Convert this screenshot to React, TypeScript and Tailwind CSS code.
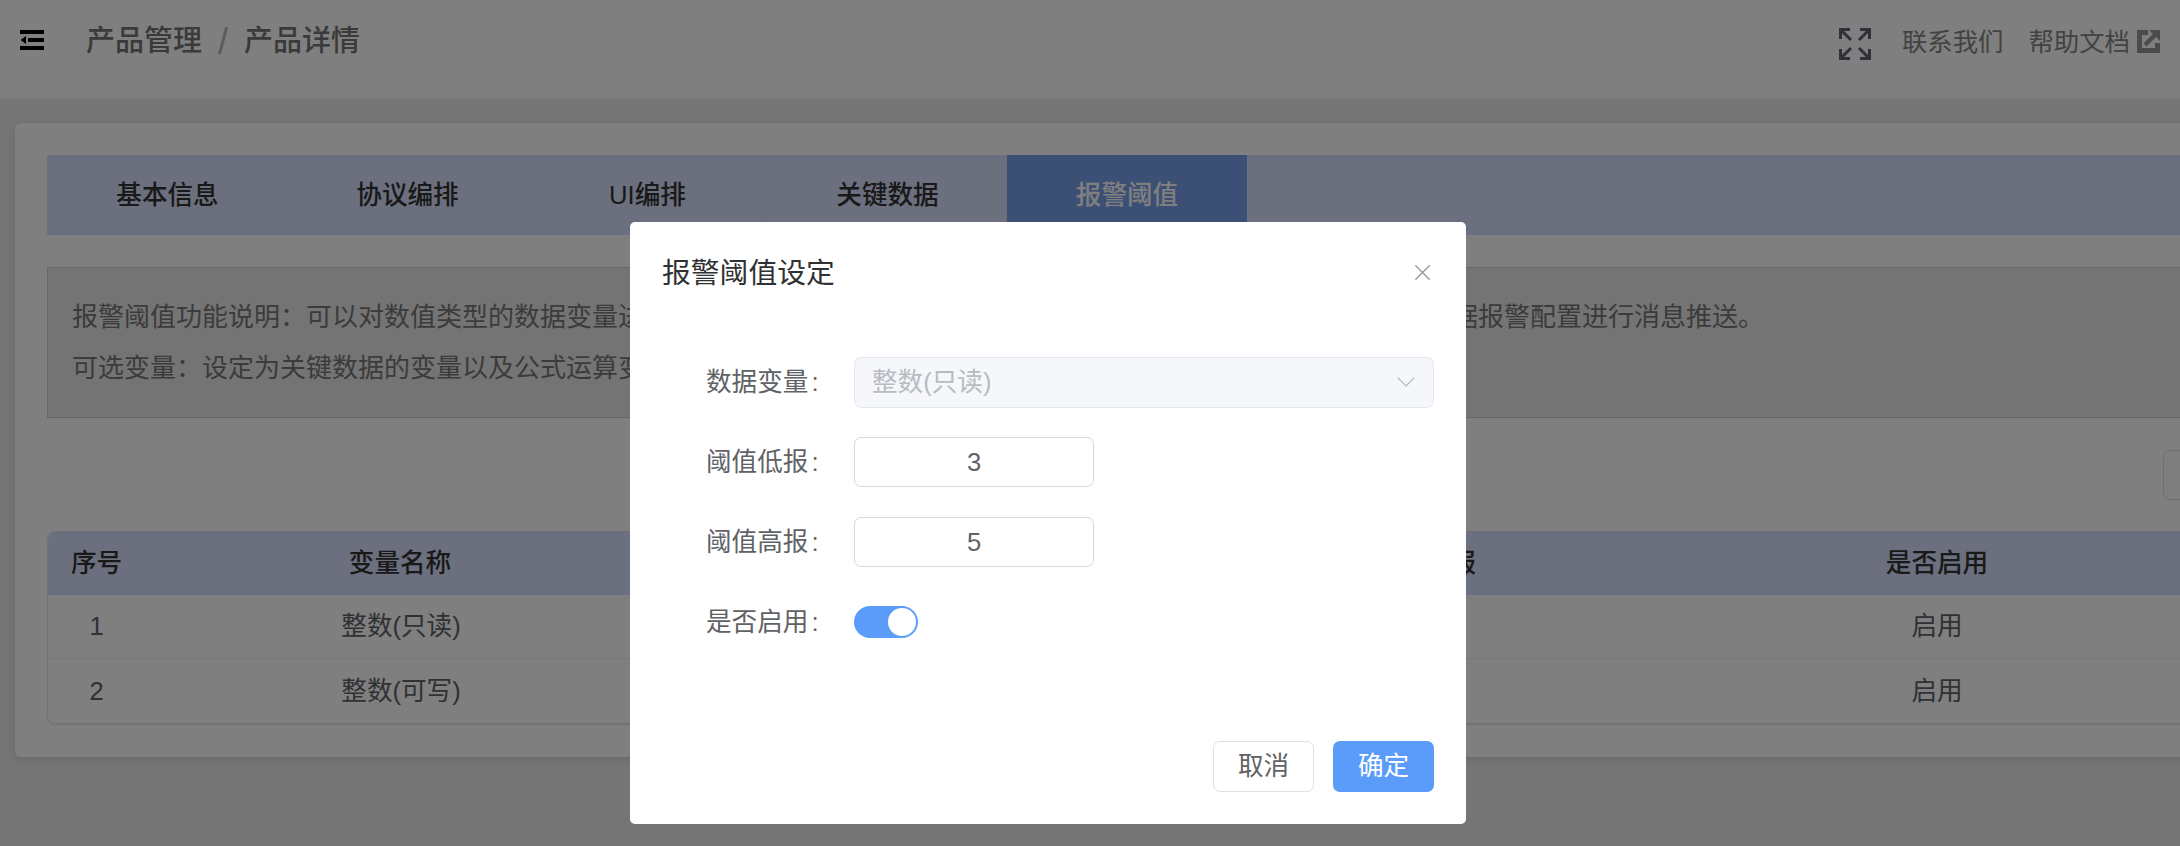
import { ChevronDown, X } from "lucide-react";

const tabs = ["基本信息", "协议编排", "UI编排", "关键数据", "报警阈值"];

const rows = [
  { id: 1, name: "整数(只读)", low: "3", high: "5", enabled: "启用" },
  { id: 2, name: "整数(可写)", low: "3", high: "5", enabled: "启用" },
];

function MenuIcon() {
  return (
    <svg width="24" height="20" viewBox="0 0 24 20" fill="#000">
      <rect x="0" y="0" width="24" height="4" />
      <rect x="8" y="8" width="16" height="4" />
      <rect x="0" y="16" width="24" height="4" />
      <path d="M6 6v8L0.5 10z" />
    </svg>
  );
}

function ExpandIcon() {
  return (
    <svg width="32" height="32" viewBox="0 0 32 32" fill="none" stroke="#5f6270" strokeWidth="3">
      <path d="M1.5 11V1.5H11M1.5 1.5L12 12" />
      <path d="M21 1.5h9.5V11M30.5 1.5L20 12" />
      <path d="M1.5 21v9.5H11M1.5 30.5L12 20" />
      <path d="M21 30.5h9.5V21M30.5 30.5L20 20" />
    </svg>
  );
}

function ExternalIcon() {
  return (
    <svg width="23" height="23" viewBox="0 0 23 23" fill="none">
      <path d="M11 2.5H2.5v18h18V13" stroke="#979797" strokeWidth="5" />
      <path d="M8 15L18 5" stroke="#979797" strokeWidth="4.5" />
      <path d="M12 0h11v11z" fill="#979797" />
    </svg>
  );
}

function FormRow({ label, children }: { label: string; children: React.ReactNode }) {
  return (
    <div className="flex h-[50px] items-center">
      <label className="w-[224px] shrink-0 pl-[76px] text-[25.6px] text-[#606266]">
        {label}
        <span className="ml-[3px]">:</span>
      </label>
      {children}
    </div>
  );
}

export default function App() {
  return (
    <div
      className="relative h-[846px] w-[2180px] overflow-hidden bg-[#ebebeb]"
      style={{ fontFamily: '"Liberation Sans", "Noto Sans CJK SC", sans-serif' }}
    >
      <header className="flex h-[99px] items-center border-b border-[#eceef1] bg-white pb-[14px] pl-5 pr-[20px]">
        <span className="mb-[4px]">
          <MenuIcon />
        </span>
        <div className="ml-[42px] flex items-center text-[29px] font-medium text-[#757575]">
          <span>产品管理</span>
          <span className="mx-[16px] text-[36px] font-normal leading-none text-[#b4b6bb]">/</span>
          <span>产品详情</span>
        </div>
        <div className="ml-auto flex items-center text-[25.4px] text-[#858585]">
          <span className="mt-[4px]">
            <ExpandIcon />
          </span>
          <span className="ml-[31px]">联系我们</span>
          <span className="ml-[25px]">帮助文档</span>
          <span className="ml-[7px]">
            <ExternalIcon />
          </span>
        </div>
      </header>

      <main className="ml-[15px] mt-[24px] h-[634px] w-[2300px] rounded-[6px] bg-white px-[32px] pt-[32px] shadow-[0_2px_12px_rgba(0,0,0,0.1)]">
        <div className="flex h-[80px] bg-[#d8defa]">
          {tabs.map((tab, i) => (
            <div
              key={tab}
              className={
                i === 4
                  ? "flex w-[240px] items-center justify-center bg-[#789fea] text-[25.6px] font-medium text-white"
                  : "flex w-[240px] items-center justify-center border-r border-[#d4daf6] pl-[2px] text-[25.6px] font-medium text-[#333333]"
              }
            >
              {tab}
            </div>
          ))}
        </div>

        <div className="mt-[32px] flex h-[151px] flex-col justify-center whitespace-nowrap border border-[#cfcfcf] bg-[#e8e8e8] px-[24px] text-[26px] leading-[51px] text-[#777777]">
          <p>报警阈值功能说明{"\uFF1A"}可以对数值类型的数据变量进行阈值设定,当数据超过或低于设定的阈值范围('时将触发报警,平台将根据报警配置进行消息推送。</p>
          <p>可选变量{"\uFF1A"}设定为关键数据的变量以及公式运算变量。</p>
        </div>

        <div className="mt-[32px] flex justify-end pr-[20px]">
          <button className="h-[50px] w-[100px] rounded-[7px] border border-[#dcdfe6] bg-white" />
        </div>

        <div className="mt-[31px] rounded-[8px] border-b-[2px] border-l border-[#e4e6ea] shadow-[0_1px_2px_rgba(0,0,0,0.05)]">
          <div className="grid h-[64px] grid-cols-[97px_repeat(4,512px)] items-center rounded-t-[8px] bg-[#d8defa] text-center text-[25.6px] font-medium text-[#333333]">
            <span>序号</span>
            <span className="pr-[2px]">变量名称</span>
            <span>阈值低报</span>
            <span>阈值高报</span>
            <span>是否启用</span>
          </div>
          {rows.map((row, i) => (
            <div
              key={row.id}
              className={
                i === 0
                  ? "grid h-[64px] grid-cols-[97px_repeat(4,512px)] items-center border-b border-[#ebeef5] text-center text-[25.6px] text-[#606266]"
                  : "grid h-[64px] grid-cols-[97px_repeat(4,512px)] items-center text-center text-[25.6px] text-[#606266]"
              }
            >
              <span>{row.id}</span>
              <span>{row.name}</span>
              <span>{row.low}</span>
              <span>{row.high}</span>
              <span>{row.enabled}</span>
            </div>
          ))}
        </div>
      </main>

      {/* dialog mask */}
      <div className="absolute inset-0 bg-black/50" />

      <div className="absolute left-[630px] top-[222px] flex h-[602px] w-[836px] flex-col rounded-[5px] bg-white">
        <div className="flex h-[135px] shrink-0 items-start justify-between pl-[32px] pr-[33px] pt-[30px]">
          <h2 className="text-[28.8px] leading-[42px] text-[#303133]">报警阈值设定</h2>
          <X size={27} strokeWidth={1.1} className="mr-[-3px] mt-[7px] text-[#909399]" />
        </div>

        <div className="flex flex-col gap-[30px]">
          <FormRow label="数据变量">
            <div className="flex h-[51px] w-[580px] items-center justify-between rounded-[7px] border border-[#e4e7ed] bg-[#f5f7fa] pl-[17px] pr-[11px] text-[25.6px] text-[#b8bbc2]">
              <span>整数(只读)</span>
              <ChevronDown size={32} strokeWidth={0.9} />
            </div>
          </FormRow>
          <FormRow label="阈值低报">
            <div className="flex h-[50px] w-[240px] items-center justify-center rounded-[7px] border border-[#d5d8e0] text-[25.6px] text-[#606266]">
              3
            </div>
          </FormRow>
          <FormRow label="阈值高报">
            <div className="flex h-[50px] w-[240px] items-center justify-center rounded-[7px] border border-[#d5d8e0] text-[25.6px] text-[#606266]">
              5
            </div>
          </FormRow>
          <FormRow label="是否启用">
            <div className="flex h-[32px] w-[64px] items-center justify-end rounded-full bg-[#5b9cfa] pr-[2px]">
              <div className="h-[28px] w-[28px] rounded-full bg-white" />
            </div>
          </FormRow>
        </div>

        <div className="mt-auto flex justify-end gap-[19px] pb-[32px] pr-[32px]">
          <button className="h-[51px] w-[101px] rounded-[7px] border border-[#dcdfe6] bg-white text-[25.6px] text-[#606266]">取消</button>
          <button className="h-[51px] w-[101px] rounded-[7px] bg-[#5b9cfa] text-[25.6px] text-white">确定</button>
        </div>
      </div>
    </div>
  );
}
